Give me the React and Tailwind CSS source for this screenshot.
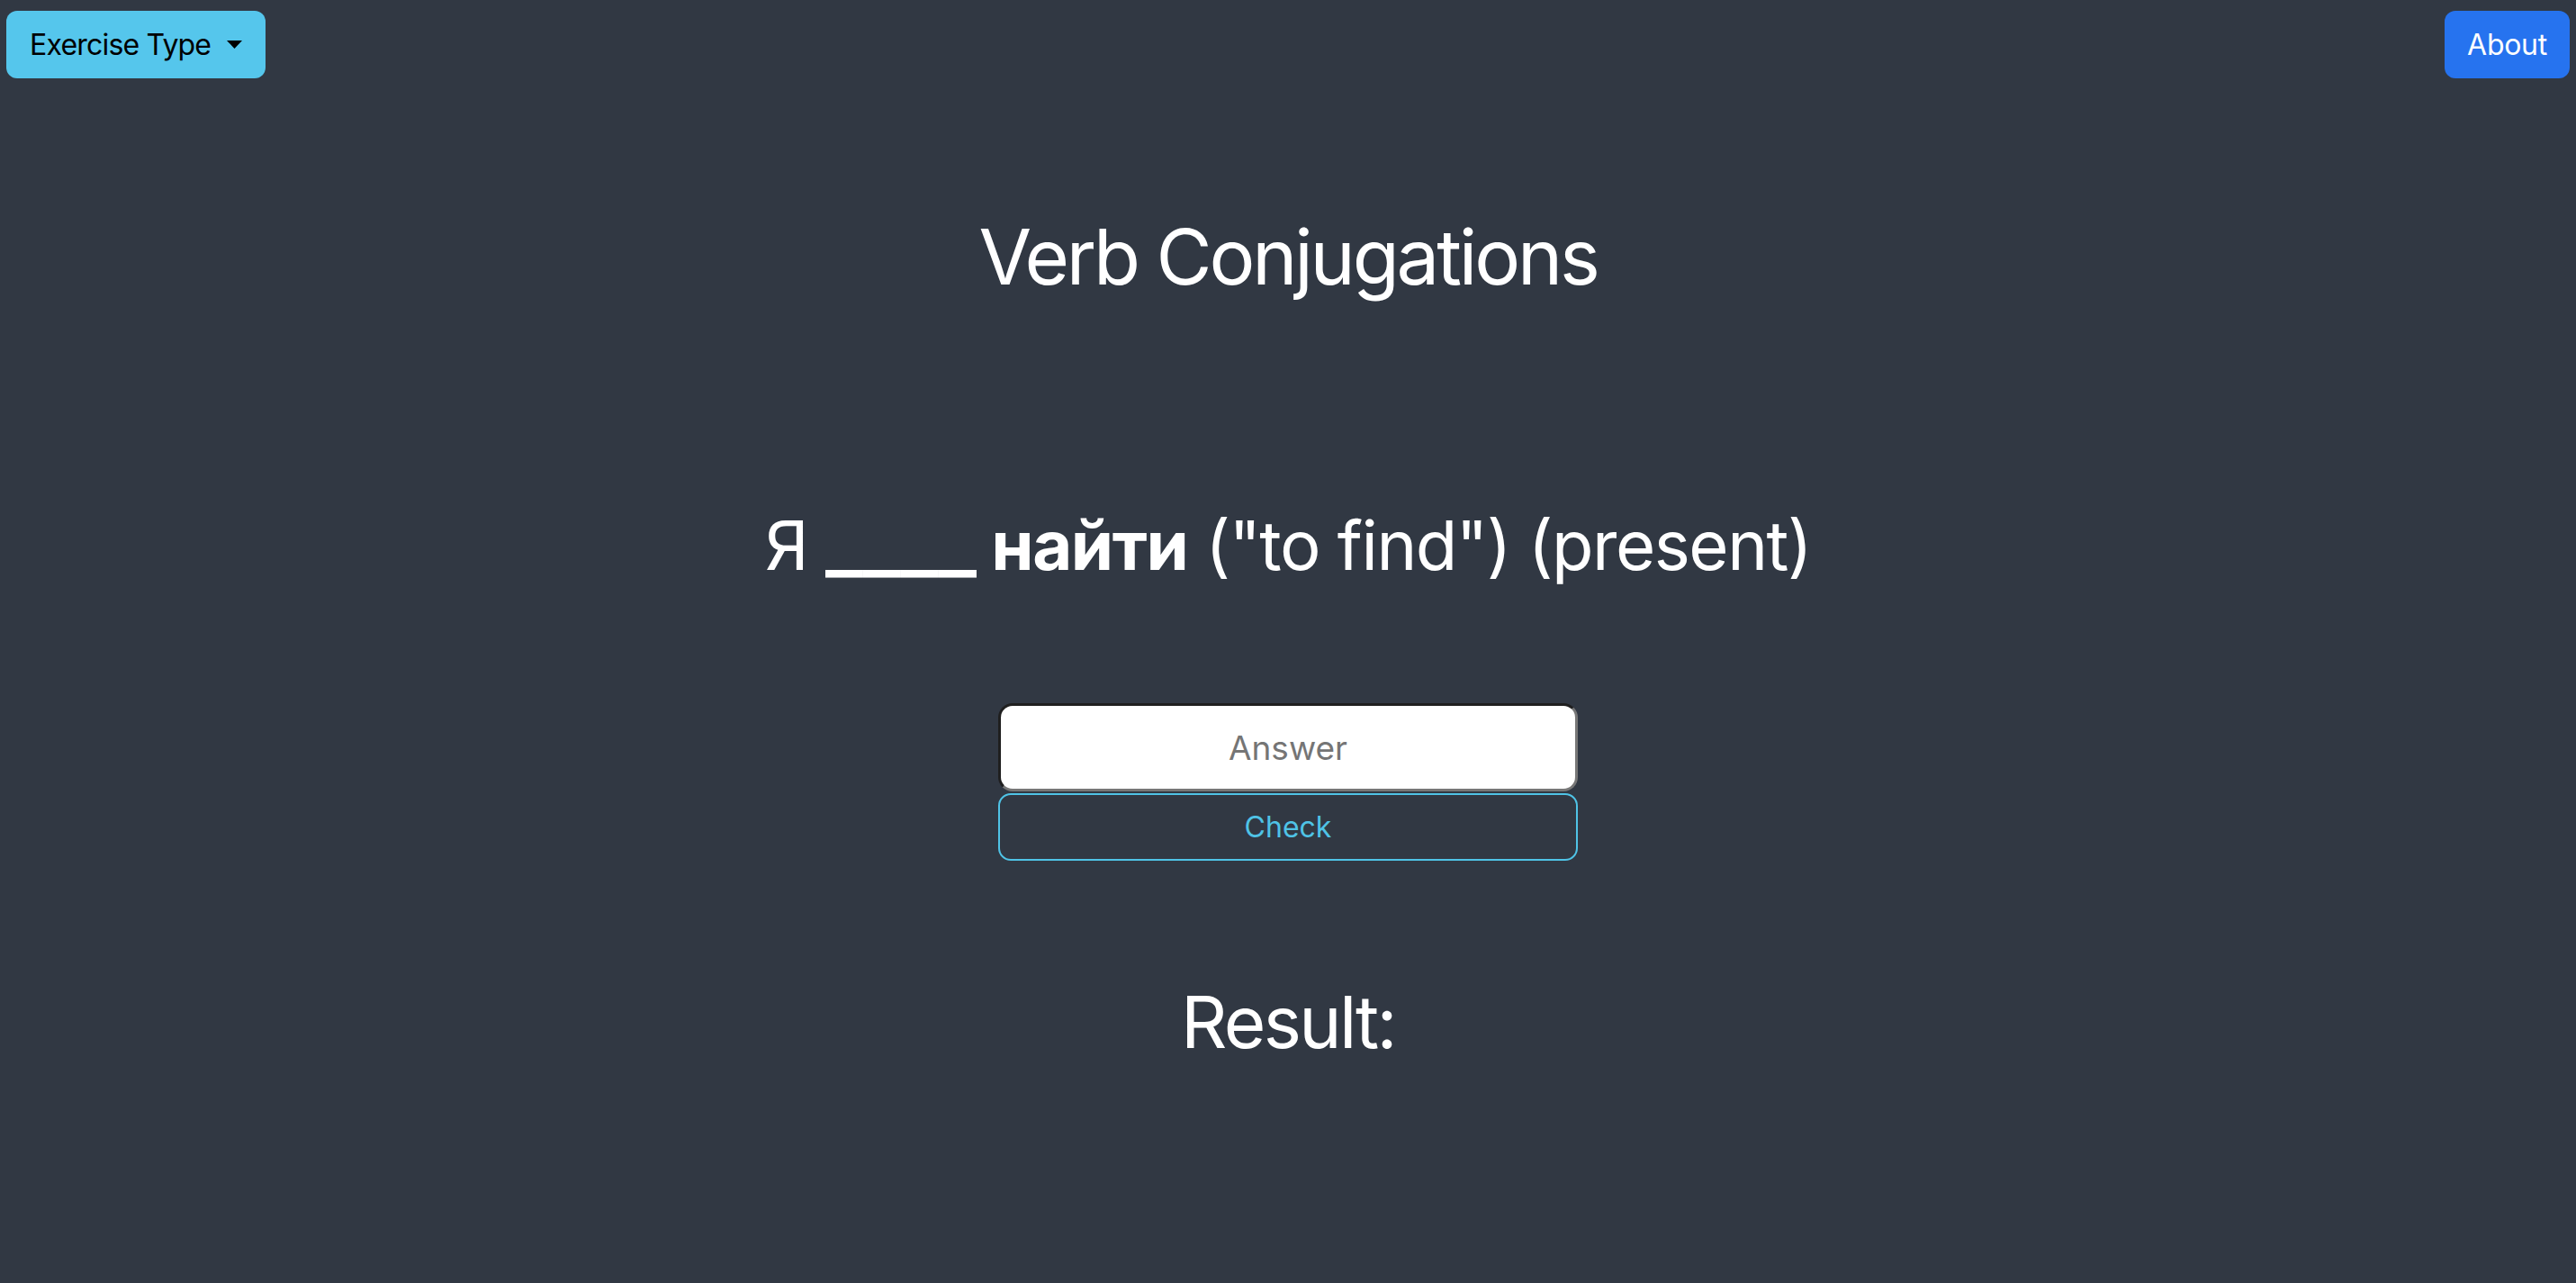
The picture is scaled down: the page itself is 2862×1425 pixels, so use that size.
export default function App() {
  return (
    <div className="min-h-screen w-full bg-[#313843] text-white" style={{ fontFamily: 'Inter, "Noto Sans", sans-serif' }}>
      <header className="flex items-start justify-between px-[7px] pt-[12px]">
        <button className="flex h-[75px] items-center rounded-[12px] bg-[#55c6ec] pl-[26px] pr-[26px] text-[32px] leading-none tracking-[-0.8px] text-black">
          <span>Exercise Type</span>
          <svg className="ml-[18px]" width="17" height="9" viewBox="0 0 17 9">
            <polygon points="0,0 17,0 8.5,9" fill="#000" />
          </svg>
        </button>
        <button className="flex h-[75px] w-[139px] items-center justify-center rounded-[12px] bg-[#2673ef] text-[32px] leading-none tracking-[-0.3px] text-white">
          About
        </button>
      </header>
      <main className="flex flex-col items-center">
        <h1 className="mt-[156px] text-[85px] font-normal leading-none tracking-[-3.2px]">Verb Conjugations</h1>
        <h2 className="mt-[239px] text-[76px] font-normal leading-none tracking-[-1.5px]">
          Я{' '}
          <b className="font-bold">
            <span className="mr-[23px] inline-block origin-left scale-x-[1.16] tracking-normal">____</span> найти
          </b>{' '}
          ("to find") (present)
        </h2>
        <form className="mt-[138px] flex w-[644px] flex-col" onSubmit={(e) => e.preventDefault()}>
          <input
            type="text"
            placeholder="Answer"
            className="h-[98px] w-full rounded-[16px] border-[3px] border-t-[#1f1f1f] border-l-[#1f1f1f] border-r-[#777777] border-b-[#777777] bg-white text-center text-[37px] text-black placeholder:text-[#757575] outline-none"
          />
          <button
            type="submit"
            className="mt-[2px] h-[75px] w-full rounded-[14px] border-2 border-[#4fc3e6] bg-transparent text-[32px] leading-none text-[#4fc3e6]"
          >
            Check
          </button>
        </form>
        <h2 className="mt-[139px] text-[80px] font-normal leading-none tracking-[-2.6px]">Result:</h2>
      </main>
    </div>
  );
}
